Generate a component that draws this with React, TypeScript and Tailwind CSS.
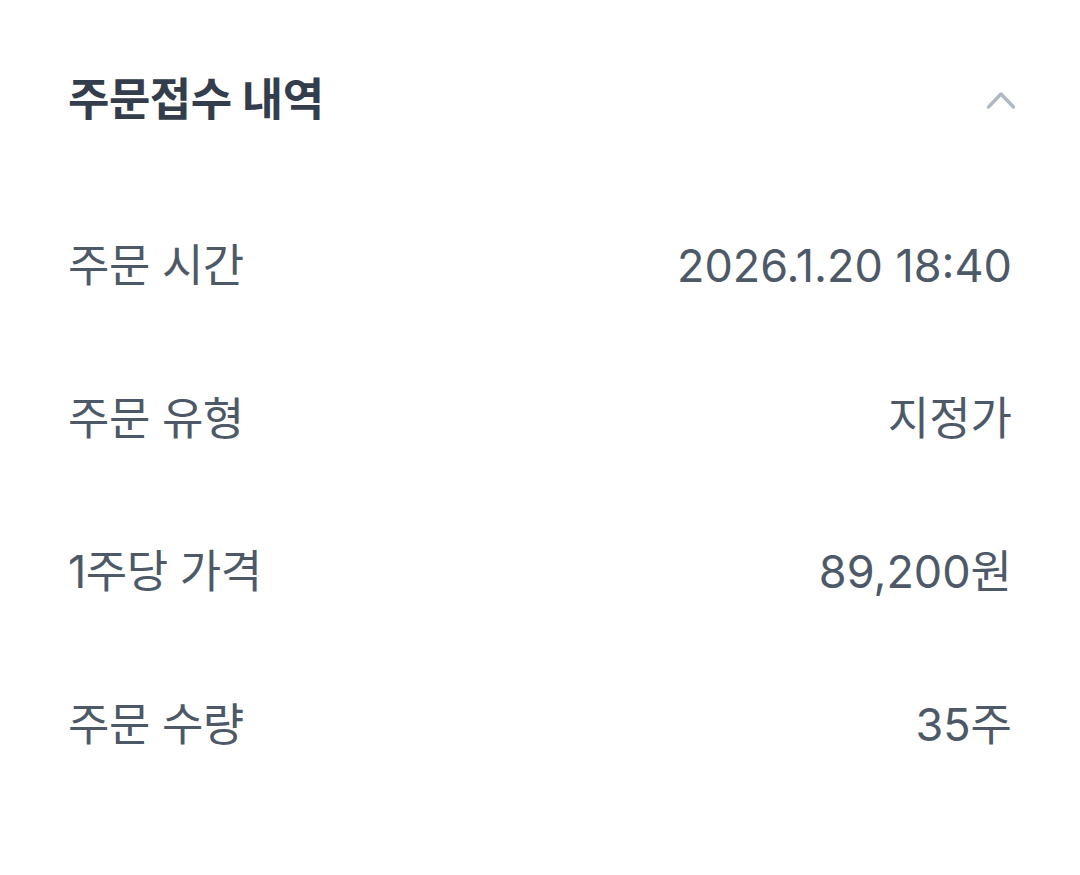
import React from "react";

const rows = [
  { label: "주문 시간", value: "2026.1.20 18:40" },
  { label: "주문 유형", value: "지정가" },
  { label: "1주당 가격", value: "89,200원" },
  { label: "주문 수량", value: "35주" },
];

export default function App() {
  return (
    <div
      className="w-[1080px] h-[875px] bg-white pl-[68px] pr-[68px]"
      style={{ fontFamily: '"Inter", "Noto Sans CJK KR", sans-serif' }}
    >
      <div className="h-[189px] pt-[10px] flex items-center justify-between">
        <div className="text-[45px] font-bold text-[#333d4b] tracking-[-0.5px]">주문접수 내역</div>
        <svg width="32" height="20" viewBox="0 0 32 20" className="mr-[-5px]">
          <polyline
            points="3.5,17 16,4 28.5,17"
            fill="none"
            stroke="#b0b8c1"
            strokeWidth="3.4"
            strokeLinecap="round"
            strokeLinejoin="round"
          />
        </svg>
      </div>
      {rows.map((r) => (
        <div key={r.label} className="h-[153px] flex items-center justify-between text-[45px] text-[#4e5968]">
          <span className="tracking-[-0.5px]">{r.label}</span>
          <span className="tracking-[0px]">{r.value}</span>
        </div>
      ))}
    </div>
  );
}
